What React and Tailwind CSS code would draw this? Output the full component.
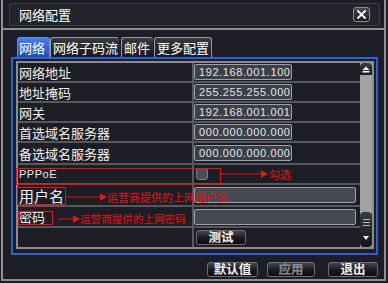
import React from "react";

const rows = [
  { label: "网络地址", ip: "192.168.001.100", h: "h-[20px]" },
  { label: "地址掩码", ip: "255.255.255.000", h: "h-[20px]" },
  { label: "网关", ip: "192.168.001.001", h: "h-[20px]" },
  { label: "首选域名服务器", ip: "000.000.000.000", h: "h-[20px]" },
  { label: "备选域名服务器", ip: "000.000.000.000", h: "h-[22px]" },
];

function IpBox({ text }) {
  return (
    <div className="w-[98px] h-[16px] bg-[#3b4048] border border-[#9ea2a7] rounded-[2px] flex items-center pl-[4px] text-[11px] tracking-[0.6px] text-[#e4e4e4] font-['Liberation_Sans',sans-serif] leading-none">
      {text}
    </div>
  );
}

function Btn({ children, w, dim }) {
  return (
    <div
      className={`${w} h-[15px] rounded-[3px] border border-[#6c6d70] bg-gradient-to-b from-[#45474d] via-[#1c1d21] to-[#0c0c0e] flex items-center justify-center text-[12.5px] font-bold leading-none ${
        dim ? "text-[#8a8b8e]" : "text-[#f2f2f2]"
      }`}
    >
      {children}
    </div>
  );
}

function Arrow({ left, top, width }) {
  return (
    <svg
      className="absolute"
      style={{ left, top }}
      width={width}
      height="8"
      viewBox={`0 0 ${width} 8`}
    >
      <line x1="0" y1="4" x2={width - 5} y2="4" stroke="#e01515" strokeWidth="1" />
      <polygon points={`${width - 7},0 ${width},4 ${width - 7},8`} fill="#e01515" />
    </svg>
  );
}

export default function App() {
  return (
    <div className="relative w-[388px] h-[283px] bg-[#1d1e25] pl-[1px] overflow-hidden font-['Noto_Sans_CJK_SC','Noto_Sans',sans-serif] text-[#f0f0f0]">
      <div className="w-[385px] h-[281px] border-x-2 border-b-2 border-[#8e8e8e] flex flex-col">
        {/* title area */}
        <div className="h-[28px] pt-[3px] pl-[6px] pr-[4px]">
          <div className="h-[23px] border border-[#3d3e45] bg-[#22232b] rounded-[2px] flex items-center justify-between pl-[9px] pr-[9px]">
            <span className="text-[13px] leading-none text-white">网络配置</span>
            <div className="w-[17px] h-[15px] rounded-[3px] border border-[#8c8d90] bg-gradient-to-b from-[#4a4b50] to-[#1a1b1f] flex items-center justify-center">
              <svg width="9" height="9" viewBox="0 0 9 9">
                <path d="M1 1 L8 8 M8 1 L1 8" stroke="#ffffff" strokeWidth="1.8" strokeLinecap="square" />
              </svg>
            </div>
          </div>
        </div>
        <div className="h-[2px] bg-[#8e8e8e]" />

        {/* body */}
        <div className="pt-[7px] pl-[8px]">
          {/* tabs */}
          <div className="flex h-[20px] pl-[6px] items-end">
            <div className="w-[33px] h-[20px] rounded-t-[3px] border border-b-0 border-[#5d8cf0] bg-gradient-to-b from-[#4a80ea] to-[#1d4cb8] flex items-center pl-[1px] text-[13px] leading-none text-white">
              网络
            </div>
            <div className="w-[69px] h-[20px] rounded-t-[3px] border-t border-l border-[#9a9a9a] bg-gradient-to-b from-[#3a3b41] to-[#17181c] flex items-center pl-[2px] text-[13px] leading-none text-white">
              网络子码流
            </div>
            <div className="ml-[2px] w-[32px] h-[20px] rounded-t-[3px] border-t border-l border-[#9a9a9a] bg-gradient-to-b from-[#3a3b41] to-[#17181c] flex items-center pl-[2px] text-[13px] leading-none text-white">
              邮件
            </div>
            <div className="ml-[1px] w-[58px] h-[20px] rounded-t-[3px] border-t border-l border-r border-[#9a9a9a] bg-gradient-to-b from-[#3a3b41] to-[#17181c] flex items-center pl-[2px] text-[13px] leading-none text-white">
              更多配置
            </div>
          </div>

          {/* blue panel */}
          <div className="w-[367px] h-[198px] border-2 border-[#2f5fd8] pt-[2px] pb-[4px] pl-[3px] pr-[2px]">
            <div className="h-full border-2 border-[#8c8c8c] flex">
              <div className="w-[342px] flex flex-col">
                {rows.map((r) => (
                  <div key={r.label} className={`${r.h} flex border-b-2 border-[#57585d]`}>
                    <div className="w-[176px] border-r-2 border-[#57585d] flex items-center pl-[1px] text-[13px] leading-none">
                      {r.label}
                    </div>
                    <div className="flex items-center">
                      <IpBox text={r.ip} />
                    </div>
                  </div>
                ))}
                {/* PPPoE */}
                <div className="h-[20px] flex border-b-2 border-[#57585d]">
                  <div className="w-[176px] border-r-2 border-[#57585d] flex items-center pl-[1px] text-[11px] tracking-[0.5px] leading-none font-['Liberation_Sans',sans-serif] text-[#e8e8e8]">
                    PPPoE
                  </div>
                  <div className="flex items-center pl-[2px]">
                    <div className="w-[12px] h-[12px] rounded-[3px] bg-[#4a4d53] border border-[#7c7f85]" />
                  </div>
                </div>
                {/* username */}
                <div className="h-[22px] flex border-b-2 border-[#57585d]">
                  <div className="w-[176px] border-r-2 border-[#57585d] flex items-center pl-[1px] text-[15px] leading-none">
                    用户名
                  </div>
                  <div className="flex-1 flex items-center">
                    <div className="w-[162px] h-[16px] bg-[#454a52] border border-[#9ea2a7] rounded-[2px]" />
                  </div>
                </div>
                {/* password */}
                <div className="h-[21px] flex border-b-2 border-[#57585d]">
                  <div className="w-[176px] border-r-2 border-[#57585d] flex items-center pl-[1px] text-[13px] leading-none">
                    密码
                  </div>
                  <div className="flex-1 flex items-center">
                    <div className="w-[162px] h-[16px] bg-[#454a52] border border-[#9ea2a7] rounded-[2px]" />
                  </div>
                </div>
                {/* test */}
                <div className="h-[19px] flex">
                  <div className="w-[176px] border-r-2 border-[#57585d]" />
                  <div className="flex items-center pl-[2px]">
                    <Btn w="w-[50px]">测试</Btn>
                  </div>
                </div>
              </div>

              {/* scrollbar */}
              <div className="w-[12px] bg-[#a2a2a2] flex flex-col justify-between">
                <div className="h-[12px] rounded-t-[4px] bg-gradient-to-b from-[#3a3b40] to-[#1a1b1f] flex items-center justify-center">
                  <svg width="8" height="7" viewBox="0 0 8 7">
                    <polygon points="4,0.5 7.5,4 0.5,4" fill="#ffffff" />
                    <rect x="0.5" y="5" width="7" height="1.5" fill="#ffffff" />
                  </svg>
                </div>
                <div className="h-[35px] rounded-[4px] bg-gradient-to-b from-[#3a3b40] to-[#141518] flex flex-col items-center pt-[7px] gap-[2px]">
                  <div className="w-[7px] h-[1px] bg-[#b8b8b8]" />
                  <div className="w-[7px] h-[1px] bg-[#b8b8b8]" />
                  <div className="w-[7px] h-[1px] bg-[#b8b8b8]" />
                  <svg className="mt-[8px]" width="6" height="4" viewBox="0 0 6 4">
                    <polygon points="0,0 6,0 3,4" fill="#ffffff" />
                  </svg>
                </div>
              </div>
            </div>
          </div>
        </div>

        {/* bottom buttons */}
        <div className="mt-[7px] flex justify-end pr-[6px]">
          <Btn w="w-[51px]">默认值</Btn>
          <div className="ml-[9px]">
            <Btn w="w-[48px]" dim>
              应用
            </Btn>
          </div>
          <div className="ml-[13px]">
            <Btn w="w-[50px]">退出</Btn>
          </div>
        </div>
      </div>

      {/* red annotations */}
      <div className="absolute left-[16px] top-[168px] w-[205px] h-[17px] border border-[#e01515]" />
      <Arrow left="220px" top="170px" width={48} />
      <div className="absolute left-[269px] top-[167px] text-[11px] leading-[14px] text-[#e01515]">勾选</div>

      <div className="absolute left-[17px] top-[187px] w-[49px] h-[18px] border border-[#e01515]" />
      <Arrow left="66px" top="193px" width={41} />
      <div className="absolute left-[107px] top-[190px] text-[11px] leading-[14px] text-[#e01515]">运营商提供的上网用户名</div>

      <div className="absolute left-[18px] top-[211px] w-[35px] h-[14px] border border-[#e01515]" />
      <Arrow left="58px" top="215px" width={22} />
      <div className="absolute left-[80px] top-[212px] text-[10.6px] leading-[14px] text-[#e01515]">运营商提供的上网密码</div>
    </div>
  );
}
